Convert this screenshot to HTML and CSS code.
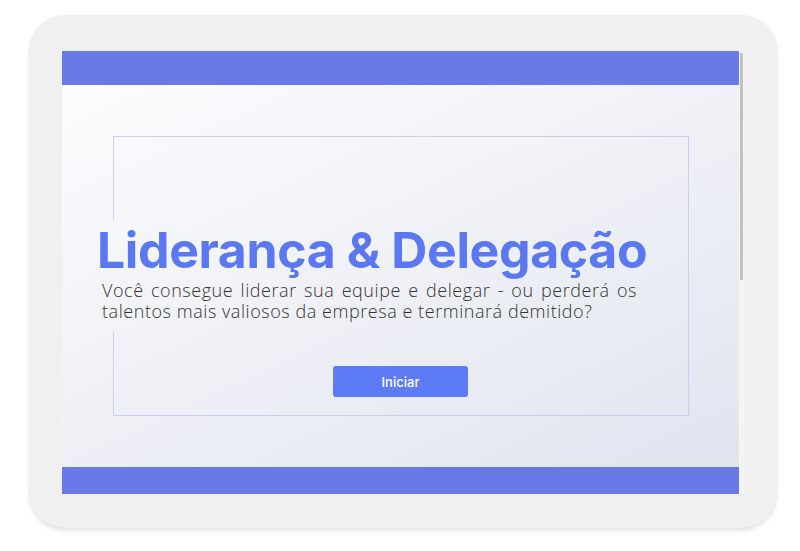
FILE: index.html
```html
<!DOCTYPE html>
<html lang="pt-BR">
<head>
<meta charset="utf-8">
<title>Liderança &amp; Delegação</title>
<link rel="stylesheet" href="styles.css">
</head>
<body>
<div class="tablet">
  <div class="screen">
    <div class="content">
      <div class="bar bar-top"></div>
      <main class="stage">
        <div class="card">
          <div class="intro">
            <h1 class="title">Liderança &amp; Delegação</h1>
            <p class="subtitle">Você consegue liderar sua equipe e delegar - ou perderá os talentos mais valiosos da empresa e terminará demitido?</p>
          </div>
          <button class="start">Iniciar</button>
        </div>
      </main>
      <div class="bar bar-bottom"></div>
    </div>
    <div class="scrollbar"><div class="thumb"></div></div>
  </div>
</div>
</body>
</html>
```
FILE: styles.css
```css
* { box-sizing: border-box; }
html, body { margin: 0; padding: 0; background: #ffffff; }
body { width: 800px; height: 551px; overflow: hidden; font-family: "Inter", "Lato", sans-serif; }

.tablet {
  margin: 15px 0 0 29px;
  width: 748px;
  height: 513px;
  background: #f0f0f0;
  border-radius: 36px;
  box-shadow: 0 3px 4px rgba(0,0,0,0.10), 0 0 1px rgba(0,0,0,0.08);
  padding: 36px 0 0 33px;
}

.screen {
  display: flex;
  width: 682px;
  height: 443px;
}

.content {
  width: 677px;
  display: flex;
  flex-direction: column;
}

.bar { background: #6a79e8; }
.bar-top { height: 34px; }
.bar-bottom { height: 27px; }

.stage {
  height: 382px;
  padding: 51px 50px 51px 51px;
  background: linear-gradient(155deg, #fcfcfe 0%, #f3f4f8 35%, #eceef5 60%, #e0e4ef 100%);
}

.card {
  height: 280px;
  border-top: 1px solid #c9cff4;
  border-right: 1px solid #c9cff4;
  border-bottom: 1px solid #c9cff4;
  background-image: linear-gradient(to bottom, #c9cff4 0, #c9cff4 83px, transparent 83px, transparent 195px, #c9cff4 195px);
  background-size: 1px 100%;
  background-repeat: no-repeat;
  display: flex;
  flex-direction: column;
  align-items: center;
  padding-top: 83px;
}

.intro {
  align-self: flex-start;
  margin-left: -16px;
  width: 545px;
  height: 112px;
}

.title {
  margin: 0;
  font-family: "Inter", sans-serif;
  font-weight: 700;
  font-size: 50px;
  line-height: 60px;
  color: #5a78f1;
  letter-spacing: -0.4px;
  white-space: nowrap;
}

.subtitle {
  margin: 0 0 0 5px;
  width: 535px;
  font-family: "Open Sans", sans-serif;
  font-weight: 300;
  font-size: 18px;
  line-height: 21px;
  color: #333333;
  letter-spacing: 0.55px;
  text-align: justify;
}

.start {
  margin-top: 34px;
  width: 135px;
  height: 31px;
  border: none;
  border-radius: 3px;
  background: #5e7bf6;
  color: #ffffff;
  font-family: "Inter", sans-serif;
  font-size: 13px;
  font-weight: 500;
}

.scrollbar {
  width: 5px;
  height: 443px;
  background: #f4f4f4;
  padding: 2px 1px 0 1px;
}
.thumb {
  width: 3px;
  height: 227px;
  background: #c1c1c1;
}
```
